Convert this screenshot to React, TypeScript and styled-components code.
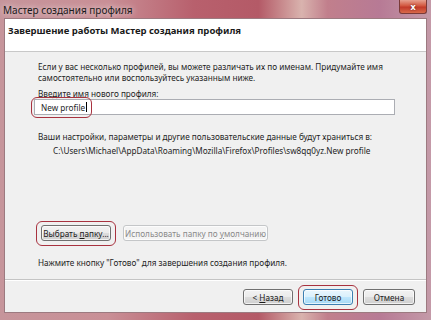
import React from 'react';
import styled, { createGlobalStyle } from 'styled-components';

const GlobalStyle = createGlobalStyle`
  html, body {
    margin: 0;
    padding: 0;
    background: #b98289;
  }
  body {
    font-family: 'Noto Sans', 'Liberation Sans', sans-serif;
  }
`;

const Window = styled.div`
  width: 431px;
  height: 320px;
  box-sizing: border-box;
  display: flex;
  flex-direction: column;
  padding: 0 4px 7px 4px;
  background: linear-gradient(
    90deg,
    #c6959b 0%,
    #c98f96 25%,
    #b8606d 45%,
    #b45a67 60%,
    #d9b3ae 70%,
    #c17f8c 76%,
    #b77a95 88%,
    #c49aa8 100%
  );
`;

const TitleBar = styled.div`
  height: 18px;
  display: flex;
  align-items: flex-start;
  justify-content: space-between;
`;

const Title = styled.span`
  font-size: 10px;
  color: #1a1a1a;
  margin: 3px 0 0 -1px;
  text-shadow: 0 0 6px rgba(255, 255, 255, 0.9);
`;

const CloseButton = styled.div`
  width: 26px;
  height: 13px;
  border: 1px solid #7a3a38;
  border-top: none;
  border-radius: 0 0 3px 3px;
  background: linear-gradient(180deg, #e6a08f 0%, #d2573f 45%, #c23a2a 55%, #d86a4a 100%);
  display: flex;
  align-items: center;
  justify-content: center;
  color: #fff;
  font-size: 9px;
  font-weight: 700;
  text-shadow: 0 0 2px #5a1a1a;
`;

const Client = styled.div`
  flex: 1;
  display: flex;
  flex-direction: column;
  background: #f0f0f0;
  border: 1px solid #9c7a80;
`;

const Header = styled.div`
  height: 33px;
  background: #ffffff;
  border-bottom: 1px solid #c8c8c8;
  box-sizing: border-box;
  padding: 5px 0 0 3px;
  font-size: 9.5px;
  font-weight: 700;
  color: #1a1a1a;
`;

const Body = styled.div`
  flex: 1;
  padding: 9px 0 0 33px;
  font-size: 8.2px;
  line-height: 11px;
  color: #1e1e1e;
`;

const Text = styled.div<{ $top?: number; $indent?: number }>`
  margin-top: ${p => p.$top ?? 0}px;
  margin-left: ${p => p.$indent ?? 0}px;
  white-space: nowrap;
`;

const Highlight = styled.span`
  position: relative;
  display: inline-flex;
  &::after {
    content: '';
    position: absolute;
    left: -5px;
    right: -5px;
    top: -4px;
    bottom: -5px;
    border: 1.5px solid #a8323f;
    border-radius: 6px;
    pointer-events: none;
  }
`;

const InputBox = styled.div`
  width: 361px;
  height: 16px;
  margin-left: -4px;
  box-sizing: border-box;
  background: #fff;
  border: 1px solid #abadb3;
  display: flex;
  align-items: center;
  padding-left: 6px;
  font-size: 8.2px;
`;

const Caret = styled.span`
  display: inline-block;
  width: 1px;
  height: 10px;
  background: #000;
  margin-left: 1px;
`;

const NameHighlight = styled.span`
  position: relative;
  display: inline-flex;
  align-items: center;
  &::after {
    content: '';
    position: absolute;
    left: -10px;
    right: -5px;
    top: -5px;
    bottom: -5px;
    border: 1.5px solid #a8323f;
    border-radius: 6px;
  }
`;

const ButtonRow = styled.div`
  display: flex;
  gap: 12px;
  margin-top: 69px;
  margin-left: 3px;
`;

const Button = styled.div<{ $disabled?: boolean; $default?: boolean; $w?: number }>`
  height: 16px;
  width: ${p => (p.$w ? `${p.$w}px` : 'auto')};
  box-sizing: border-box;
  padding: 0 4px;
  border-radius: 3px;
  display: flex;
  align-items: center;
  justify-content: center;
  font-size: 8.2px;
  white-space: pre;
  color: ${p => (p.$disabled ? '#8a8a8a' : '#1a1a1a')};
  border: 1px solid ${p => (p.$disabled ? '#c4c6c8' : p.$default ? '#3c7fb1' : '#707070')};
  background: ${p =>
    p.$disabled
      ? '#f4f4f4'
      : p.$default
      ? 'linear-gradient(180deg, #eaf6fd 0%, #d9f0fc 50%, #bee6fd 51%, #a7d9f5 100%)'
      : 'linear-gradient(180deg, #f2f2f2 0%, #ebebeb 50%, #dddddd 51%, #cfcfcf 100%)'};
  box-shadow: inset 0 0 0 1px rgba(255, 255, 255, 0.7);
`;

const Label = styled.span``;

const Mn = styled.span`
  text-decoration: underline;
`;

const Footer = styled.div`
  height: 33px;
  box-sizing: border-box;
  border-top: 1px solid #c4c4c4;
  box-shadow: inset 0 1px 0 #ffffff;
  display: flex;
  align-items: flex-start;
  justify-content: flex-end;
  gap: 10px;
  padding: 9px 11px 0 0;
`;

export default function App() {
  return (
    <>
      <GlobalStyle />
      <Window>
        <TitleBar>
          <Title>Мастер создания профиля</Title>
          <CloseButton>x</CloseButton>
        </TitleBar>
        <Client>
          <Header>Завершение работы Мастер создания профиля</Header>
          <Body>
            <Text>
              Если у вас несколько профилей, вы можете различать их по именам. Придумайте имя
            </Text>
            <Text>самостоятельно или воспользуйтесь указанным ниже.</Text>
            <Text $top={5}>Введите имя нового профиля:</Text>
            <InputBox>
              <NameHighlight>
                New profile
                <Caret />
              </NameHighlight>
            </InputBox>
            <Text $top={16}>
              Ваши настройки, параметры и другие пользовательские данные будут храниться в:
            </Text>
            <Text $top={3} $indent={15}>
              C:\Users\Michael\AppData\Roaming\Mozilla\Firefox\Profiles\sw8qq0yz.New profile
            </Text>
            <ButtonRow>
              <Highlight>
                <Button $w={70}>
                  <Label>
                    Выбрать <Mn>п</Mn>апку...
                  </Label>
                </Button>
              </Highlight>
              <Button $disabled $w={145}>
                <Label>
                  Использовать папку по <Mn>у</Mn>молчанию
                </Label>
              </Button>
            </ButtonRow>
            <Text $top={16}>Нажмите кнопку "Готово" для завершения создания профиля.</Text>
          </Body>
          <Footer>
            <Button $w={50}>
              <Label>
                &lt; <Mn>Н</Mn>азад
              </Label>
            </Button>
            <Highlight>
              <Button $default $w={50}>
                Готово
              </Button>
            </Highlight>
            <Button $w={52}>Отмена</Button>
          </Footer>
        </Client>
      </Window>
    </>
  );
}
